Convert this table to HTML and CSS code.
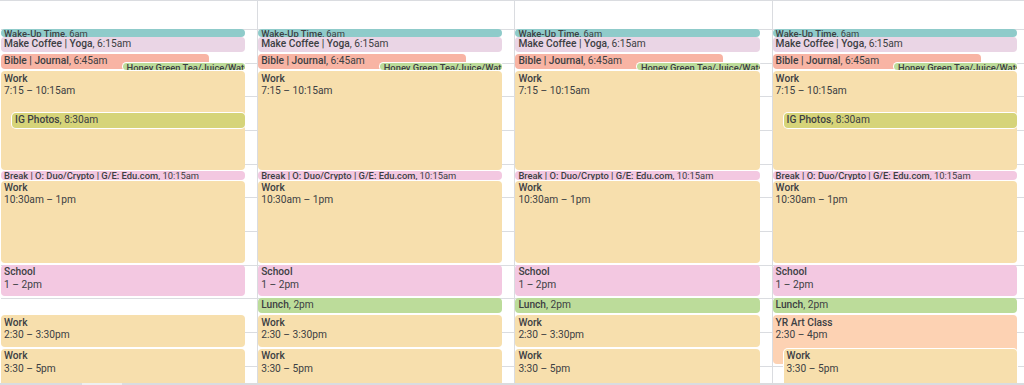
FILE: index.html
```html
<!DOCTYPE html>
<html lang="en">
<head>
<meta charset="utf-8">
<title>Week</title>
<link rel="stylesheet" href="styles.css">
</head>
<body>
<div class="cal">
  <div class="grid">
    <!-- Day 1 -->
    <div class="day">
      <div class="head"></div>
      <div class="slots">
        <div class="ev short wake" style="--s:0;--d:.25"><span class="t">Wake-Up Time</span>, 6am</div>
        <div class="ev coffee" style="--s:.25;--d:.5"><span class="t">Make Coffee | Yoga</span>, 6:15am</div>
        <div class="ev bible narrow" style="--s:.75;--d:.5"><span class="t">Bible | Journal</span>, 6:45am</div>
        <div class="ev short honey over-half" style="--s:1;--d:.25"><span class="t">Honey Green Tea/Juice/Water</span>, 7am</div>
        <div class="ev work tall" style="--s:1.25;--d:3"><div class="t">Work</div><div>7:15 – 10:15am</div></div>
        <div class="ev ig over-in" style="--s:2.5;--d:.5"><span class="t">IG Photos</span>, 8:30am</div>
        <div class="ev short school brk" style="--s:4.25;--d:.25"><span class="t">Break | O: Duo/Crypto | G/E: Edu.com</span>, 10:15am</div>
        <div class="ev work tall" style="--s:4.5;--d:2.5"><div class="t">Work</div><div>10:30am – 1pm</div></div>
        <div class="ev school tall" style="--s:7;--d:1"><div class="t">School</div><div>1 – 2pm</div></div>
        <div class="ev work tall" style="--s:8.5;--d:1"><div class="t">Work</div><div>2:30 – 3:30pm</div></div>
        <div class="ev work tall" style="--s:9.5;--d:1.5"><div class="t">Work</div><div>3:30 – 5pm</div></div>
      </div>
    </div>
    <!-- Day 2 -->
    <div class="day">
      <div class="head"></div>
      <div class="slots">
        <div class="ev short wake" style="--s:0;--d:.25"><span class="t">Wake-Up Time</span>, 6am</div>
        <div class="ev coffee" style="--s:.25;--d:.5"><span class="t">Make Coffee | Yoga</span>, 6:15am</div>
        <div class="ev bible narrow" style="--s:.75;--d:.5"><span class="t">Bible | Journal</span>, 6:45am</div>
        <div class="ev short honey over-half" style="--s:1;--d:.25"><span class="t">Honey Green Tea/Juice/Water</span>, 7am</div>
        <div class="ev work tall" style="--s:1.25;--d:3"><div class="t">Work</div><div>7:15 – 10:15am</div></div>
        <div class="ev short school brk" style="--s:4.25;--d:.25"><span class="t">Break | O: Duo/Crypto | G/E: Edu.com</span>, 10:15am</div>
        <div class="ev work tall" style="--s:4.5;--d:2.5"><div class="t">Work</div><div>10:30am – 1pm</div></div>
        <div class="ev school tall" style="--s:7;--d:1"><div class="t">School</div><div>1 – 2pm</div></div>
        <div class="ev lunch" style="--s:8;--d:.5"><span class="t">Lunch</span>, 2pm</div>
        <div class="ev work tall" style="--s:8.5;--d:1"><div class="t">Work</div><div>2:30 – 3:30pm</div></div>
        <div class="ev work tall" style="--s:9.5;--d:1.5"><div class="t">Work</div><div>3:30 – 5pm</div></div>
      </div>
    </div>
    <!-- Day 3 -->
    <div class="day">
      <div class="head"></div>
      <div class="slots">
        <div class="ev short wake" style="--s:0;--d:.25"><span class="t">Wake-Up Time</span>, 6am</div>
        <div class="ev coffee" style="--s:.25;--d:.5"><span class="t">Make Coffee | Yoga</span>, 6:15am</div>
        <div class="ev bible narrow" style="--s:.75;--d:.5"><span class="t">Bible | Journal</span>, 6:45am</div>
        <div class="ev short honey over-half" style="--s:1;--d:.25"><span class="t">Honey Green Tea/Juice/Water</span>, 7am</div>
        <div class="ev work tall" style="--s:1.25;--d:3"><div class="t">Work</div><div>7:15 – 10:15am</div></div>
        <div class="ev short school brk" style="--s:4.25;--d:.25"><span class="t">Break | O: Duo/Crypto | G/E: Edu.com</span>, 10:15am</div>
        <div class="ev work tall" style="--s:4.5;--d:2.5"><div class="t">Work</div><div>10:30am – 1pm</div></div>
        <div class="ev school tall" style="--s:7;--d:1"><div class="t">School</div><div>1 – 2pm</div></div>
        <div class="ev lunch" style="--s:8;--d:.5"><span class="t">Lunch</span>, 2pm</div>
        <div class="ev work tall" style="--s:8.5;--d:1"><div class="t">Work</div><div>2:30 – 3:30pm</div></div>
        <div class="ev work tall" style="--s:9.5;--d:1.5"><div class="t">Work</div><div>3:30 – 5pm</div></div>
      </div>
    </div>
    <!-- Day 4 -->
    <div class="day">
      <div class="head"></div>
      <div class="slots">
        <div class="ev short wake" style="--s:0;--d:.25"><span class="t">Wake-Up Time</span>, 6am</div>
        <div class="ev coffee" style="--s:.25;--d:.5"><span class="t">Make Coffee | Yoga</span>, 6:15am</div>
        <div class="ev bible narrow" style="--s:.75;--d:.5"><span class="t">Bible | Journal</span>, 6:45am</div>
        <div class="ev short honey over-half" style="--s:1;--d:.25"><span class="t">Honey Green Tea/Juice/Water</span>, 7am</div>
        <div class="ev work tall" style="--s:1.25;--d:3"><div class="t">Work</div><div>7:15 – 10:15am</div></div>
        <div class="ev ig over-in" style="--s:2.5;--d:.5"><span class="t">IG Photos</span>, 8:30am</div>
        <div class="ev short school brk" style="--s:4.25;--d:.25"><span class="t">Break | O: Duo/Crypto | G/E: Edu.com</span>, 10:15am</div>
        <div class="ev work tall" style="--s:4.5;--d:2.5"><div class="t">Work</div><div>10:30am – 1pm</div></div>
        <div class="ev school tall" style="--s:7;--d:1"><div class="t">School</div><div>1 – 2pm</div></div>
        <div class="ev lunch" style="--s:8;--d:.5"><span class="t">Lunch</span>, 2pm</div>
        <div class="ev art tall" style="--s:8.5;--d:1.5"><div class="t">YR Art Class</div><div>2:30 – 4pm</div></div>
        <div class="ev work tall over-in" style="--s:9.5;--d:1.5"><div class="t">Work</div><div>3:30 – 5pm</div></div>
      </div>
    </div>
  </div>
  <div class="hbar"><div class="thumb"></div></div>
</div>
</body>
</html>
```

FILE: styles.css
```css
* { box-sizing: border-box; }

html, body {
  margin: 0;
  padding: 0;
  background: #fff;
}

body {
  font-family: Roboto, "Noto Sans", Arial, sans-serif;
  color: #3c4043;
}

.cal {
  width: 1024px;
  height: 385px;
  overflow: hidden;
  display: flex;
  flex-direction: column;
  border-top: 1px solid #dadce0;
}

.grid {
  --h: 33.67px;
  display: grid;
  grid-template-columns: repeat(4, 257.2px);
  height: 382px;
  overflow: hidden;
  flex: none;
}

.day {
  display: flex;
  flex-direction: column;
  border-left: 1px solid #dadce0;
  min-width: 0;
}

.day:first-child {
  border-left-color: transparent;
}

.head {
  height: 28px;
  flex: none;
}

.slots {
  position: relative;
  flex: 1;
  background-image: repeating-linear-gradient(
    to bottom,
    #dadce0 0,
    #dadce0 1px,
    transparent 1px,
    transparent var(--h)
  );
}

.ev {
  position: absolute;
  left: 0;
  right: 12px;
  top: calc(var(--s) * var(--h));
  height: calc(var(--d) * var(--h) - 2px);
  border-radius: 4px;
  padding: 1px 3px 0;
  font-size: 10.2px;
  line-height: 12px;
  white-space: nowrap;
  overflow: hidden;
}

.ev.tall {
  padding-top: 1.6px;
  line-height: 12.3px;
}

.ev.short {
  padding-top: 0;
  font-size: 9.4px;
  line-height: 10px;
  height: calc(var(--d) * var(--h) - 0.8px);
}

.ev.brk {
  margin-top: -1px;
  height: 9px;
}

.t {
  font-weight: 500;
}

.narrow {
  right: auto;
  width: 208px;
}

.over-half {
  left: 121.5px;
  padding-left: 4px;
  box-shadow: 0 0 0 1px #fff;
}

.over-in {
  left: 11px;
  box-shadow: 0 0 0 1px #fff;
}

.wake   { background: #8fcbca; }
.coffee { background: #ead5e5; }
.bible  { background: #f8b4a4; }
.honey  { background: #bcdc9a; }
.work   { background: #f7dfad; }
.ig     { background: #d6d479; }
.school { background: #f3c8e1; }
.lunch  { background: #bcdc9a; }
.art    { background: #fdd2b3; }

.hbar {
  height: 2px;
  flex: none;
  background: #dadce0;
  display: flex;
}

.thumb {
  margin-left: 82px;
  width: 40px;
  background: #eeeff1;
}
```
